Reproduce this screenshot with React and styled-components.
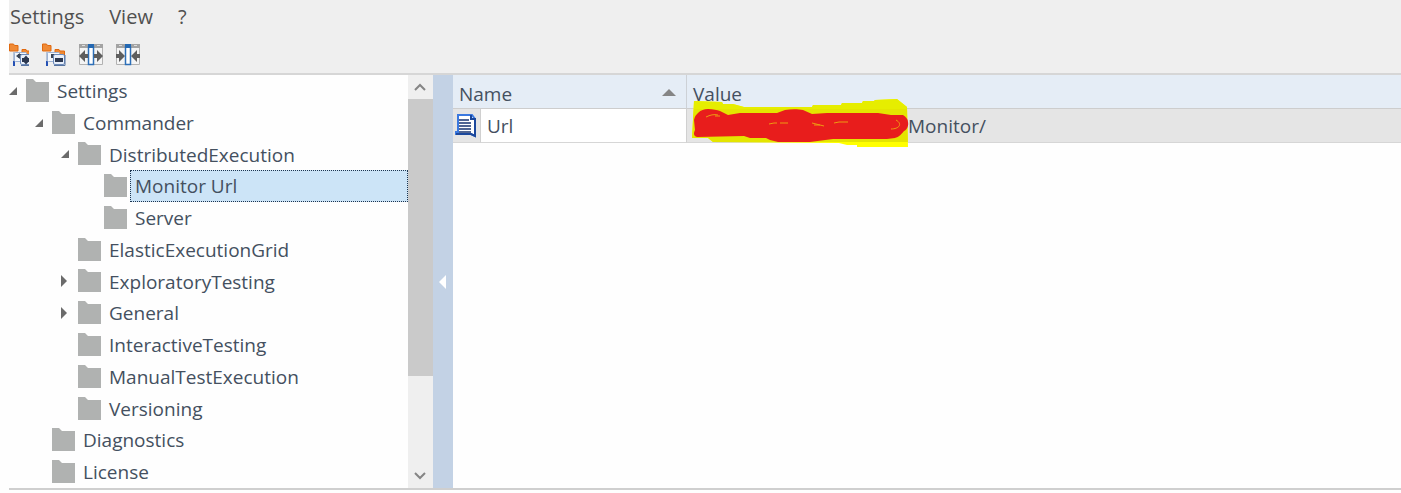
import { useState } from "react";
import styled, { createGlobalStyle } from "styled-components";

const GlobalStyle = createGlobalStyle`
  * {
    box-sizing: border-box;
  }
  body {
    margin: 0;
    background: #fefefe;
    color: #44505f;
    font-family: "Open Sans", "Noto Sans", sans-serif;
    font-size: 19px;
  }
  button {
    margin: 0;
    padding: 0;
    border: 0;
    background: none;
    color: inherit;
    font: inherit;
  }
  svg {
    display: block;
  }
`;

const Window = styled.div`
  display: flex;
  flex-direction: column;
  height: 100vh;
  padding: 0 0 3px 9px;
  overflow: hidden;
`;

const TopBars = styled.header`
  flex: none;
  background: #efefef;
  border-bottom: 2px solid #d6d6d6;
`;

const MenuBar = styled.nav`
  display: flex;
  gap: 25px;
  height: 34px;
  padding-left: 1px;
`;

const MenuButton = styled.button`
  height: 32px;
  color: #505050;
  font-size: 20px;
`;

const Toolbar = styled.div`
  display: flex;
  gap: 13px;
  height: 39px;
  padding-top: 9px;
  overflow: hidden;
`;

const ToolButton = styled.button`
  width: 24px;
  height: 24px;

  &:first-child {
    display: flex;
    justify-content: flex-end;
    width: 20px;
    overflow: hidden;
  }
`;

const Workspace = styled.main`
  display: flex;
  flex: 1;
  min-height: 0;
  border-bottom: 2px solid #cfcfcf;
`;

const Tree = styled.div`
  display: grid;
  flex: 0 1 399px;
  grid-auto-rows: minmax(0, 32px);
  overflow: hidden;
`;

const TreeRow = styled.button`
  display: flex;
  align-items: center;
  padding-left: ${({ $depth }) => $depth * 26}px;
  text-align: left;
`;

const ArrowSlot = styled.span`
  flex: none;
  width: 17px;
`;

const FolderSlot = styled.span`
  flex: none;
  width: 26px;
`;

const TreeLabel = styled.span`
  flex: 1;
  align-self: stretch;
  padding-left: 4px;
  border: 1px dotted ${({ $selected }) => ($selected ? "#1d3550" : "transparent")};
  background: ${({ $selected }) => ($selected ? "#cce4f7" : "transparent")};
  line-height: 31px;
  white-space: nowrap;
`;

const ScrollTrack = styled.div`
  display: flex;
  flex: 0 0 25px;
  flex-direction: column;
  background: #efefef;
`;

const ScrollButton = styled.button`
  display: flex;
  flex: none;
  align-items: center;
  justify-content: center;
  height: 24px;
`;

const ScrollLane = styled.div`
  flex: 1;
`;

const ScrollThumb = styled.div`
  height: 76%;
  background: #cacaca;
`;

const Splitter = styled.button`
  display: flex;
  flex: 0 0 20px;
  align-items: center;
  justify-content: center;
  background: #c3d2e5;
`;

const Details = styled.section`
  flex: 1;
  min-width: 0;
`;

const Table = styled.table`
  width: 100%;
  border-collapse: separate;
  border-spacing: 0;
  table-layout: fixed;
`;

const HeadCell = styled.th`
  height: 34px;
  padding: 4px 10px 0 6px;
  border-right: ${({ $last }) => ($last ? "0" : "1px solid #cdd1d6")};
  border-bottom: 1px solid #cdcdcd;
  background: #e5edf6;
  font-weight: 400;
  line-height: 28px;
  text-align: left;
`;

const HeadContent = styled.span`
  display: flex;
  align-items: center;
  justify-content: space-between;
`;

const IconCell = styled.td`
  height: 34px;
  padding: 0 0 0 2px;
  border-bottom: 1px solid #d6d6d6;
  background: #e5e5e5;
`;

const Cell = styled.td`
  height: 34px;
  padding: 0 6px;
  border-right: 1px solid #d0d0d0;
  border-bottom: 1px solid #d6d6d6;
  border-left: 1px solid #d0d0d0;
  background: #fff;
  line-height: 32px;
`;

const ValueCell = styled(Cell)`
  border-right: 0;
  border-left: 0;
  background: #e5e5e5;
`;

const ValueContent = styled.span`
  display: flex;
`;

const Redacted = styled.span`
  position: relative;
  width: 215px;
`;

const Marker = styled.svg`
  position: absolute;
  top: -12px;
  left: -2px;
`;

const NODES = [
  { label: "Settings", depth: 0, arrow: "open" },
  { label: "Commander", depth: 1, arrow: "open" },
  { label: "DistributedExecution", depth: 2, arrow: "open" },
  { label: "Monitor Url", depth: 3 },
  { label: "Server", depth: 3 },
  { label: "ElasticExecutionGrid", depth: 2 },
  { label: "ExploratoryTesting", depth: 2, arrow: "closed" },
  { label: "General", depth: 2, arrow: "closed" },
  { label: "InteractiveTesting", depth: 2 },
  { label: "ManualTestExecution", depth: 2 },
  { label: "Versioning", depth: 2 },
  { label: "Diagnostics", depth: 1 },
  { label: "License", depth: 1 },
];

const HIGHLIGHT =
  "M3 3L31 4 32 6H42L53 9H121L122 7H150L151 5H171L172 3H183L184 2 206 1 216 9 217 49H166V47H156L148 45 22 44 17 40H1z";

const Arrow = ({ state }) => (
  <svg width="10" height="12" fill="#6b6b6b">
    <path d={state === "open" ? "M8 2v8H0z" : "M0 0l6 6-6 6z"} />
  </svg>
);

const Folder = () => (
  <svg width="23" height="24" fill="#b0b2b1">
    <path d="M0 0h7l3 3h13v20H0z" />
  </svg>
);

const TreeToggleIcon = ({ expand }) => (
  <svg width="24" height="24">
    <path d="M.5 1h4l1 1.500H9V8H.5zM13 6.500h4l1 1.500h4.500v4H13z" fill="#f08a35" stroke="#e0690f" />
    <path d="M5 9v13" stroke="#7d96bd" />
    <path d="M5 18v5" stroke="#2450b4" strokeWidth="2" />
    <rect x="5.500" y="9.500" width="12" height="9" rx="1" fill="#f3f7fd" stroke="#9db2d3" />
    <path d="M9 11h4v4H9z" fill="#3a4657" />
    {expand && <path d="M7 13l4-3v6z" fill="#3a4657" />}
    <rect x="11.500" y="11.500" width="11" height="10" rx="1.500" fill="#e9f0fb" stroke="#6d8bbb" />
    <path d="M12 22.500h11V12" fill="none" stroke="#56739f" />
    <path d="M13 15h8v4h-8z" fill="#2c3850" />
    {expand && <path d="M17 12.500l4 4.500-4 4.500-4-4.500z" fill="#2c3850" />}
  </svg>
);

const ColumnsIcon = ({ inward }) => (
  <svg width="24" height="24">
    <path d="M.5 2h23v19.500H.5z" fill="#f4f4f4" stroke="#b2b2b2" />
    <path d="M0 1h24v4H0z" fill="#a3a3a3" />
    <path d="M3 2h3v1H3zM18 2h3v1h-3z" fill="#dedede" />
    <path d="M9.500 4h5v17.500h-5z" fill="#fff" stroke="#2d6fb8" strokeWidth="1.500" />
    <path d="M9 1h6v4H9z" fill="#2468b2" />
    {inward ? (
      <path d="M0 11h3V7l6 6-6 6v-4H0zM24 11h-3V7l-6 6 6 6v-4h3z" fill="#5e5e5e" />
    ) : (
      <path d="M9 11H6V7l-6 6 6 6v-4h3zM15 11h3V7l6 6-6 6v-4h-3z" fill="#5e5e5e" />
    )}
  </svg>
);

const Chevron = ({ down }) => (
  <svg width="14" height="10" fill="none" stroke="#858585" strokeWidth="2">
    <path d={down ? "M1 2l5 5 5-5" : "M1 8l5-5 5 5"} />
  </svg>
);

const DocumentIcon = () => (
  <svg width="23" height="24">
    <path d="M3 1h14l3 4v17l-4-2H1v-2h2z" fill="#fff" stroke="#3b79e0" strokeWidth="2" />
    <path d="M16 1v4h4v17l-4-2H1" fill="none" stroke="#1c489c" strokeWidth="2" />
    <path d="M4 6h10M4 9h12M4 12h12M4 15h12M4 18h12" stroke="#17336f" strokeWidth="1.500" />
  </svg>
);

const Scribble = () => (
  <Marker width="220" height="52" aria-hidden="true">
    <defs>
      <clipPath id="over-header">
        <path d="M0 0h220v11H0z" />
      </clipPath>
      <clipPath id="over-row">
        <path d="M0 11h220v33H0z" />
      </clipPath>
    </defs>
    <path d={HIGHLIGHT} fill="#ffff00" />
    <path d={HIGHLIGHT} fill="#e6ed00" clipPath="url(#over-header)" />
    <path d={HIGHLIGHT} fill="#e4e500" clipPath="url(#over-row)" />
    <path
      d="M3 22C4 18 5 17 7 15 10 12 13 11 17 11c5 0 9 1 12 2l8 4 12-2h37l8-3c6-1 13-1 18 0l9 4 15-1h51l13 2h12c3 2 5 4 5 7 1 5-2 8-4 9-4 5-6 6-9 7l-8 1h-54l-23 3H87l-8-2-4-2H59l-6-2-47 1c-3-1-4-3-2-7z"
      fill="#e81d1c"
    />
    <path
      d="M15 19c4-2 8-3 12-2M24 18h5M78 26l5-1h3M89 25h8M121 25l12 3M123 27h6M143 25l5-1h9M205 22c7 4 3 9-5 9"
      fill="none"
      stroke="#ee9a12"
    />
  </Marker>
);

const App = () => {
  const [selected, setSelected] = useState("Monitor Url");

  return (
    <>
      <GlobalStyle />
      <Window>
        <TopBars>
          <MenuBar>
            <MenuButton>Settings</MenuButton>
            <MenuButton>View</MenuButton>
            <MenuButton>?</MenuButton>
          </MenuBar>
          <Toolbar>
            <ToolButton aria-label="Expand all">
              <TreeToggleIcon expand />
            </ToolButton>
            <ToolButton aria-label="Collapse all">
              <TreeToggleIcon />
            </ToolButton>
            <ToolButton aria-label="Widen columns">
              <ColumnsIcon />
            </ToolButton>
            <ToolButton aria-label="Narrow columns">
              <ColumnsIcon inward />
            </ToolButton>
          </Toolbar>
        </TopBars>
        <Workspace>
          <Tree role="tree">
            {NODES.map(({ label, depth, arrow }) => (
              <TreeRow
                key={label}
                role="treeitem"
                aria-level={depth + 1}
                aria-selected={label === selected}
                $depth={depth}
                onClick={() => setSelected(label)}
              >
                <ArrowSlot>{arrow && <Arrow state={arrow} />}</ArrowSlot>
                <FolderSlot>
                  <Folder />
                </FolderSlot>
                <TreeLabel $selected={label === selected}>{label}</TreeLabel>
              </TreeRow>
            ))}
          </Tree>
          <ScrollTrack>
            <ScrollButton aria-label="Scroll up">
              <Chevron />
            </ScrollButton>
            <ScrollLane>
              <ScrollThumb />
            </ScrollLane>
            <ScrollButton aria-label="Scroll down">
              <Chevron down />
            </ScrollButton>
          </ScrollTrack>
          <Splitter aria-label="Hide tree">
            <svg width="8" height="14" fill="#fff">
              <path d="M7 0v14L0 7z" />
            </svg>
          </Splitter>
          <Details>
            <Table>
              <colgroup>
                <col width="27" />
                <col width="207" />
                <col />
              </colgroup>
              <thead>
                <tr>
                  <HeadCell colSpan={2}>
                    <HeadContent>
                      Name
                      <svg width="14" height="10" fill="#858585">
                        <path d="M7 0l7 7H0z" />
                      </svg>
                    </HeadContent>
                  </HeadCell>
                  <HeadCell $last>Value</HeadCell>
                </tr>
              </thead>
              <tbody>
                <tr>
                  <IconCell>
                    <DocumentIcon />
                  </IconCell>
                  <Cell>Url</Cell>
                  <ValueCell>
                    <ValueContent>
                      <Redacted>
                        <Scribble />
                      </Redacted>
                      Monitor/
                    </ValueContent>
                  </ValueCell>
                </tr>
              </tbody>
            </Table>
          </Details>
        </Workspace>
      </Window>
    </>
  );
};

export default App;
